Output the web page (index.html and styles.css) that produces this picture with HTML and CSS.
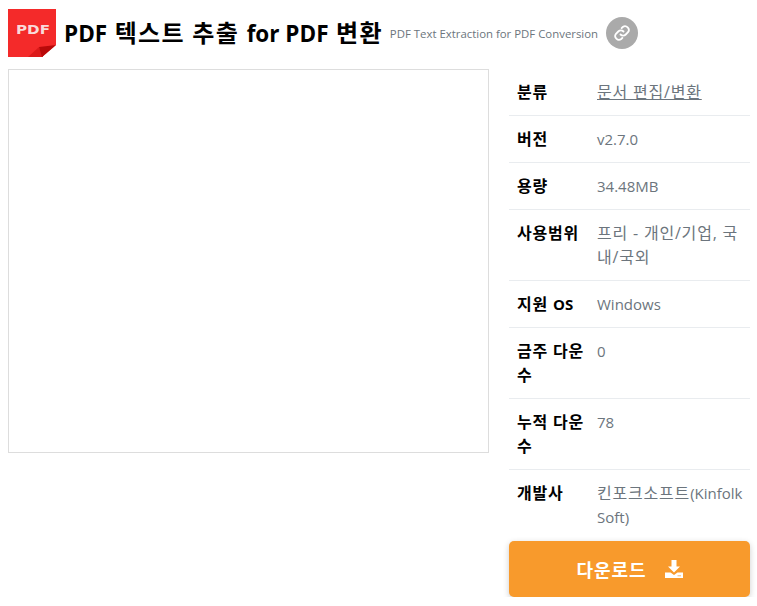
FILE: index.html
```html
<!doctype html>
<html lang="ko">
<head>
    <meta charset="UTF-8">
    <title>PDF 텍스트 추출 for PDF 변환</title>
    <link rel="stylesheet" href="styles.css">
</head>
<body>
<div class="head">
    <svg class="logo" width="48" height="48" viewBox="0 0 48 48">
        <path d="M0 0H48V36L34 48H0Z" fill="#f42a2a"/>
        <path d="M20 48L31 38L35 48Z" fill="#dc1a1a"/>
        <path d="M31 38L48 36L34 48Z" fill="#b80a0a"/>
        <text x="8" y="25" textLength="34" lengthAdjust="spacingAndGlyphs" class="logoText">PDF</text>
    </svg>
    <h1><span class="en">PDF</span> 텍스트 추출 <span class="en">for PDF</span> 변환</h1>
    <span class="sub">PDF Text Extraction for PDF Conversion</span>
    <a class="share" href="javascript:;">
        <svg width="18" height="18" viewBox="0 0 24 24" fill="none" stroke="#fff" stroke-width="2.400" stroke-linecap="round">
            <path d="M10 14a5 5 0 0 0 7 0l3-3a5 5 0 0 0-7-7l-1.500 1.500"/>
            <path d="M14 10a5 5 0 0 0-7 0l-3 3a5 5 0 0 0 7 7l1.500-1.500"/>
        </svg>
    </a>
</div>
<div class="main">
    <div class="shot"></div>
    <div class="side">
        <table class="info">
            <tr><th>분류</th><td><a href="javascript:;">문서 편집/변환</a></td></tr>
            <tr><th>버전</th><td><span class="en">v2.7.0</span></td></tr>
            <tr><th>용량</th><td><span class="en">34.48MB</span></td></tr>
            <tr><th>사용범위</th><td>프리 - 개인/기업, 국내/국외</td></tr>
            <tr><th>지원 <span class="en">OS</span></th><td><span class="en">Windows</span></td></tr>
            <tr><th>금주 다운수</th><td><span class="en">0</span></td></tr>
            <tr><th>누적 다운수</th><td><span class="en">78</span></td></tr>
            <tr class="last"><th>개발사</th><td>킨포크소프트<span class="en">(Kinfolk</span> <span class="en">Soft)</span></td></tr>
        </table>
        <a class="down" href="javascript:;">
            <span>다운로드</span>
            <svg width="18" height="18" viewBox="0 0 18 18">
                <path d="M6.500 0H11.500V6.500H15L9 12.500L3 6.500H6.500Z" fill="#fff"/>
                <path d="M0 12.500H5.500L9 15L12.500 12.500H18V18H0Z" fill="#fff"/>
                <path d="M12.500 15.500H16V16.200H12.500Z" fill="#f89a2c"/>
            </svg>
        </a>
    </div>
</div>
</body>
</html>
```

FILE: styles.css
```css
*{
    margin:0;
    padding:0;
    box-sizing:border-box;
}
body{
    margin:0;
    padding:9px 7px 0 8px;
    font-family:"Open Sans","Noto Sans CJK KR",sans-serif;
    color:#000;
    background:#fff;
}
.head{
    display:flex;
    align-items:center;
    height:48px;
}
.logo{
    flex:none;
    margin-right:8px;
}
.logoText{
    font-family:"DejaVu Sans",sans-serif;
    font-size:12px;
    font-weight:bold;
    fill:#f9dada;
}
h1{
    font-size:24px;
    font-weight:700;
    line-height:48px;
    letter-spacing:1.300px;
    white-space:nowrap;
}
h1 .en{
    font-size:22.500px;
    letter-spacing:0;
}
.sub{
    font-size:11.400px;
    color:#6c757d;
    margin-left:7px;
    white-space:nowrap;
}
.share{
    width:32px;
    height:32px;
    border-radius:50%;
    background:#aaa;
    margin-left:8px;
    display:flex;
    align-items:center;
    justify-content:center;
}
.main{
    display:flex;
    margin-top:12px;
}
.shot{
    width:481px;
    height:384px;
    border:1px solid #ddd;
    flex:none;
}
.side{
    width:241px;
    margin-left:20px;
}
.info{
    width:241px;
    border-collapse:collapse;
    table-layout:fixed;
    font-size:16px;
    line-height:24px;
    letter-spacing:.800px;
}
.info .en{
    font-size:15px;
    letter-spacing:0;
}
.info th{
    width:80px;
    padding:11px 2px 11px 8px;
    text-align:left;
    font-weight:700;
    vertical-align:top;
}
.info td{
    padding:11px 6px 11px 8px;
    color:#6c757d;
    vertical-align:top;
}
.info tr{
    border-bottom:1px solid #e9ecef;
}
.info tr.last{
    border-bottom:0;
}
.info a{
    color:#6c757d;
    text-decoration:underline;
}
.down{
    display:flex;
    align-items:center;
    justify-content:center;
    gap:18px;
    height:56px;
    margin-top:1px;
    background:#f89a2c;
    border-radius:5px;
    box-shadow:0 2px 6px rgba(0,0,0,.2);
    color:#fff;
    font-size:18px;
    font-weight:700;
    letter-spacing:1px;
    text-decoration:none;
}
```
